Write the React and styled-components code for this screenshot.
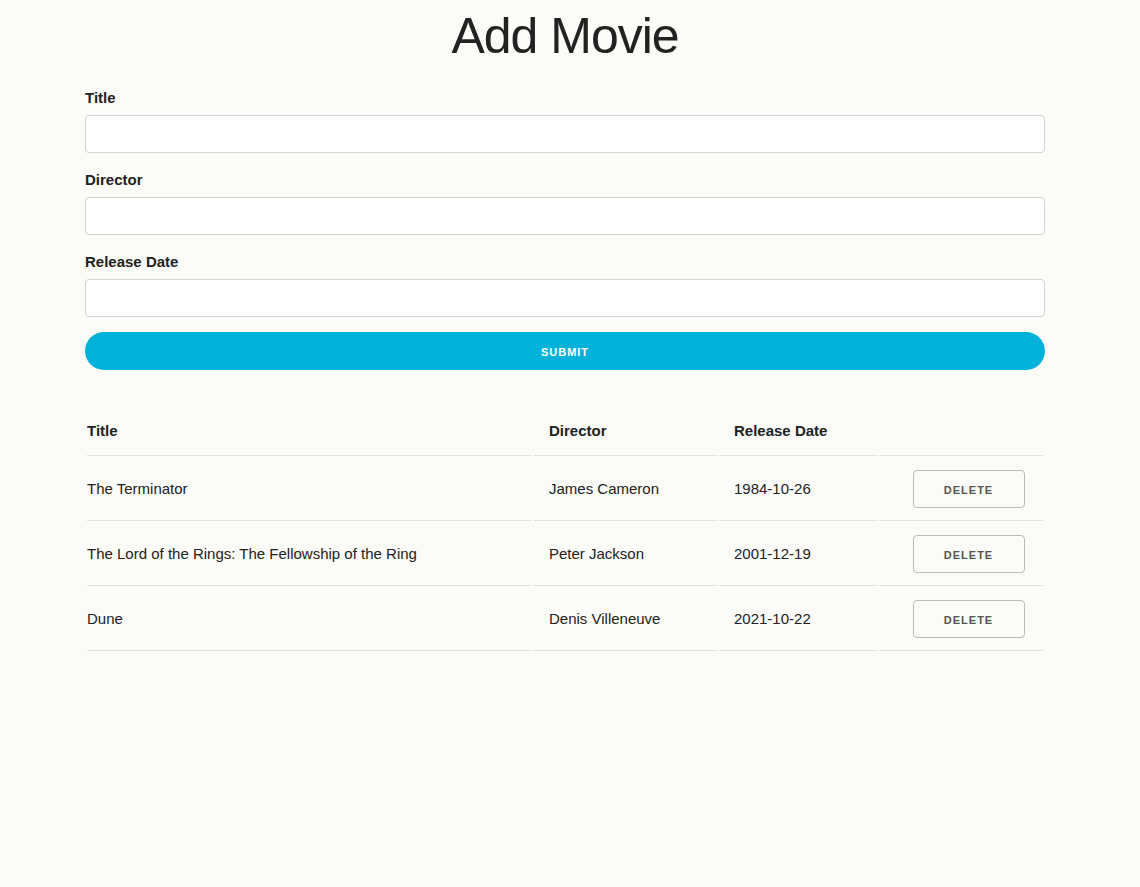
import styled, { createGlobalStyle } from "styled-components";

const movies = [
  { title: "The Terminator", director: "James Cameron", date: "1984-10-26" },
  {
    title: "The Lord of the Rings: The Fellowship of the Ring",
    director: "Peter Jackson",
    date: "2001-12-19",
  },
  { title: "Dune", director: "Denis Villeneuve", date: "2021-10-22" },
];

const GlobalStyle = createGlobalStyle`
  html, body {
    margin: 0;
    background: #fbfbf7;
  }
  body {
    font-family: "Liberation Sans", Arial, sans-serif;
    font-size: 15px;
    line-height: 1.6;
    color: #222;
  }
  * { box-sizing: border-box; }
`;

const App = () => {
  return (
    <>
      <GlobalStyle />
      <Container>
        <Heading>Add Movie</Heading>
        <Form onSubmit={(e) => e.preventDefault()}>
          <Label htmlFor="title">Title</Label>
          <Input id="title" type="text" />
          <Label htmlFor="director">Director</Label>
          <Input id="director" type="text" />
          <Label htmlFor="date">Release Date</Label>
          <Input id="date" type="text" />
          <SubmitButton type="submit">Submit</SubmitButton>
        </Form>
        <Table>
          <thead>
            <tr>
              <Th $width={445}>Title</Th>
              <Th $width={183}>Director</Th>
              <Th $width={158}>Release Date</Th>
              <Th $width={164}></Th>
            </tr>
          </thead>
          <tbody>
            {movies.map((m) => (
              <tr key={m.title}>
                <Td>{m.title}</Td>
                <Td>{m.director}</Td>
                <Td>{m.date}</Td>
                <ActionCell>
                  <DeleteButton type="button">Delete</DeleteButton>
                </ActionCell>
              </tr>
            ))}
          </tbody>
        </Table>
      </Container>
    </>
  );
};

export default App;

const Container = styled.div`
  width: 960px;
  margin-left: 85px;
  padding-top: 6px;
`;

const Heading = styled.h1`
  margin: 0 0 20px;
  text-align: center;
  font-size: 50px;
  line-height: 1.2;
  font-weight: 300;
  letter-spacing: -1px;
`;

const Form = styled.form`
  margin: 0 0 35px;
`;

const Label = styled.label`
  display: block;
  margin-bottom: 5px;
  font-weight: 600;
`;

const Input = styled.input`
  display: block;
  width: 100%;
  height: 38px;
  padding: 6px 10px;
  margin: 0 0 15px;
  background: #fff;
  border: 1px solid #d1d1d1;
  border-radius: 4px;
  font: inherit;
`;

const SubmitButton = styled.button`
  display: block;
  width: 100%;
  height: 38px;
  margin: 0;
  padding: 0 30px;
  border: none;
  border-radius: 19px;
  background: #00b2d9;
  color: #fff;
  font-family: "Liberation Sans", Arial, sans-serif;
  font-size: 11px;
  font-weight: 600;
  letter-spacing: 1px;
  text-transform: uppercase;
  line-height: 40px;
  cursor: pointer;
`;

const Table = styled.table`
  width: 960px;
  border-spacing: 2px;
  table-layout: fixed;
  margin: 0;
`;

const Th = styled.th`
  width: ${(p) => p.$width}px;
  padding: 12px 15px;
  text-align: left;
  font-weight: 600;
  border-bottom: 1px solid #e1e1e1;
  &:first-child { padding-left: 0; }
  &:last-child { padding-right: 0; }
`;

const Td = styled.td`
  padding: 12px 15px;
  border-bottom: 1px solid #e1e1e1;
  &:first-child { padding-left: 0; }
`;

const ActionCell = styled(Td)`
  padding-right: 0;
  text-align: center;
`;

const DeleteButton = styled.button`
  width: 112px;
  height: 38px;
  padding: 0;
  background: transparent;
  border: 1px solid #bbb;
  border-radius: 4px;
  color: #555;
  font-family: "Liberation Sans", Arial, sans-serif;
  font-size: 11px;
  font-weight: 600;
  letter-spacing: 1px;
  text-transform: uppercase;
  line-height: 38px;
  cursor: pointer;
`;
